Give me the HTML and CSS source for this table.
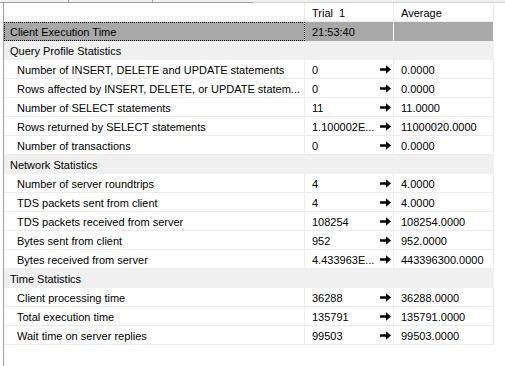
FILE: index.html
```html
<!DOCTYPE html>
<html lang="en">
<head>
  <meta charset="UTF-8">
  <title>Client Statistics</title>
  <link rel="stylesheet" href="styles.css">
</head>
<body>
  <div class="topbar">
    <span class="seg s1"></span><span class="seg s2"></span><span class="seg s3"></span><span class="seg s4"></span>
  </div>
  <div class="grid">
    <div class="cell head"></div>
    <div class="cell head val">Trial&nbsp; 1</div>
    <div class="cell head val">Average</div>

    <div class="cell sel focus">Client Execution Time</div>
    <div class="cell sel val">21:53:40</div>
    <div class="cell sel"></div>

    <div class="cell group">Query Profile Statistics</div>
    <div class="cell group"></div>
    <div class="cell group"></div>

    <div class="cell item">Number of INSERT, DELETE and UPDATE statements</div>
    <div class="cell trial"><span>0</span><svg class="arrow" viewBox="0 0 11 9"><path d="M0 3.3h6V0.3l5 4.2-5 4.2v-3H0z"/></svg></div>
    <div class="cell val">0.0000</div>

    <div class="cell item">Rows affected by INSERT, DELETE, or UPDATE statem...</div>
    <div class="cell trial"><span>0</span><svg class="arrow" viewBox="0 0 11 9"><path d="M0 3.3h6V0.3l5 4.2-5 4.2v-3H0z"/></svg></div>
    <div class="cell val">0.0000</div>

    <div class="cell item">Number of SELECT statements</div>
    <div class="cell trial"><span>11</span><svg class="arrow" viewBox="0 0 11 9"><path d="M0 3.3h6V0.3l5 4.2-5 4.2v-3H0z"/></svg></div>
    <div class="cell val">11.0000</div>

    <div class="cell item">Rows returned by SELECT statements</div>
    <div class="cell trial"><span>1.100002E...</span><svg class="arrow" viewBox="0 0 11 9"><path d="M0 3.3h6V0.3l5 4.2-5 4.2v-3H0z"/></svg></div>
    <div class="cell val">11000020.0000</div>

    <div class="cell item">Number of transactions</div>
    <div class="cell trial"><span>0</span><svg class="arrow" viewBox="0 0 11 9"><path d="M0 3.3h6V0.3l5 4.2-5 4.2v-3H0z"/></svg></div>
    <div class="cell val">0.0000</div>

    <div class="cell group">Network Statistics</div>
    <div class="cell group"></div>
    <div class="cell group"></div>

    <div class="cell item">Number of server roundtrips</div>
    <div class="cell trial"><span>4</span><svg class="arrow" viewBox="0 0 11 9"><path d="M0 3.3h6V0.3l5 4.2-5 4.2v-3H0z"/></svg></div>
    <div class="cell val">4.0000</div>

    <div class="cell item">TDS packets sent from client</div>
    <div class="cell trial"><span>4</span><svg class="arrow" viewBox="0 0 11 9"><path d="M0 3.3h6V0.3l5 4.2-5 4.2v-3H0z"/></svg></div>
    <div class="cell val">4.0000</div>

    <div class="cell item">TDS packets received from server</div>
    <div class="cell trial"><span>108254</span><svg class="arrow" viewBox="0 0 11 9"><path d="M0 3.3h6V0.3l5 4.2-5 4.2v-3H0z"/></svg></div>
    <div class="cell val">108254.0000</div>

    <div class="cell item">Bytes sent from client</div>
    <div class="cell trial"><span>952</span><svg class="arrow" viewBox="0 0 11 9"><path d="M0 3.3h6V0.3l5 4.2-5 4.2v-3H0z"/></svg></div>
    <div class="cell val">952.0000</div>

    <div class="cell item">Bytes received from server</div>
    <div class="cell trial"><span>4.433963E...</span><svg class="arrow" viewBox="0 0 11 9"><path d="M0 3.3h6V0.3l5 4.2-5 4.2v-3H0z"/></svg></div>
    <div class="cell val">443396300.0000</div>

    <div class="cell group">Time Statistics</div>
    <div class="cell group"></div>
    <div class="cell group"></div>

    <div class="cell item">Client processing time</div>
    <div class="cell trial"><span>36288</span><svg class="arrow" viewBox="0 0 11 9"><path d="M0 3.3h6V0.3l5 4.2-5 4.2v-3H0z"/></svg></div>
    <div class="cell val">36288.0000</div>

    <div class="cell item">Total execution time</div>
    <div class="cell trial"><span>135791</span><svg class="arrow" viewBox="0 0 11 9"><path d="M0 3.3h6V0.3l5 4.2-5 4.2v-3H0z"/></svg></div>
    <div class="cell val">135791.0000</div>

    <div class="cell item">Wait time on server replies</div>
    <div class="cell trial"><span>99503</span><svg class="arrow" viewBox="0 0 11 9"><path d="M0 3.3h6V0.3l5 4.2-5 4.2v-3H0z"/></svg></div>
    <div class="cell val">99503.0000</div>
  </div>
</body>
</html>
```
FILE: styles.css
```css
body {
  margin:0; padding:0;
  background:#fff; color:#000;
  font-family:"Liberation Sans", Arial, sans-serif;
  font-size:11px;
  height:366px; overflow:hidden;
}
.topbar {
  display:flex; height:3px;
  background:#f0f0f0;
}
.seg { height:2px; border-bottom:1px solid #a0a0a0; }
.s1 { width:68px; border-right:1px solid #a0a0a0; }
.s2 { width:83px; border-right:1px solid #a0a0a0; }
.s3 { width:100px; }
.s4 { flex:1; border-bottom-color:#d0d0d0; }
.grid {
  display:grid;
  grid-template-columns:301px 89px 100px;
  grid-auto-rows:19px;
  margin-left:3px;
  border-left:1px solid #a0a0a0;
  height:363px;
  align-content:start;
}
.cell {
  box-sizing:border-box;
  border-right:1px solid #ececec;
  border-bottom:1px solid #ececec;
  padding-top:1px;
  line-height:18px;
  white-space:nowrap; overflow:hidden;
}
.head { padding-left:7px; }
.val { padding-left:7px; }
.sel { background:#a8a8a8; border-right-color:#fff; border-bottom-color:#a8a8a8; }
.focus {
  outline:1px dotted #000; outline-offset:-1px;
  padding-left:6px;
}
.group { background:#f0f0f0; border-color:#f0f0f0; padding-left:6px; }
.item { padding-left:13px; }
.trial {
  display:flex; justify-content:space-between; align-items:center;
  padding-top:0; padding-left:7px; padding-right:2px;
}
.trial span { padding-top:1px; }
.arrow { width:11px; height:9px; fill:#000; }
```
